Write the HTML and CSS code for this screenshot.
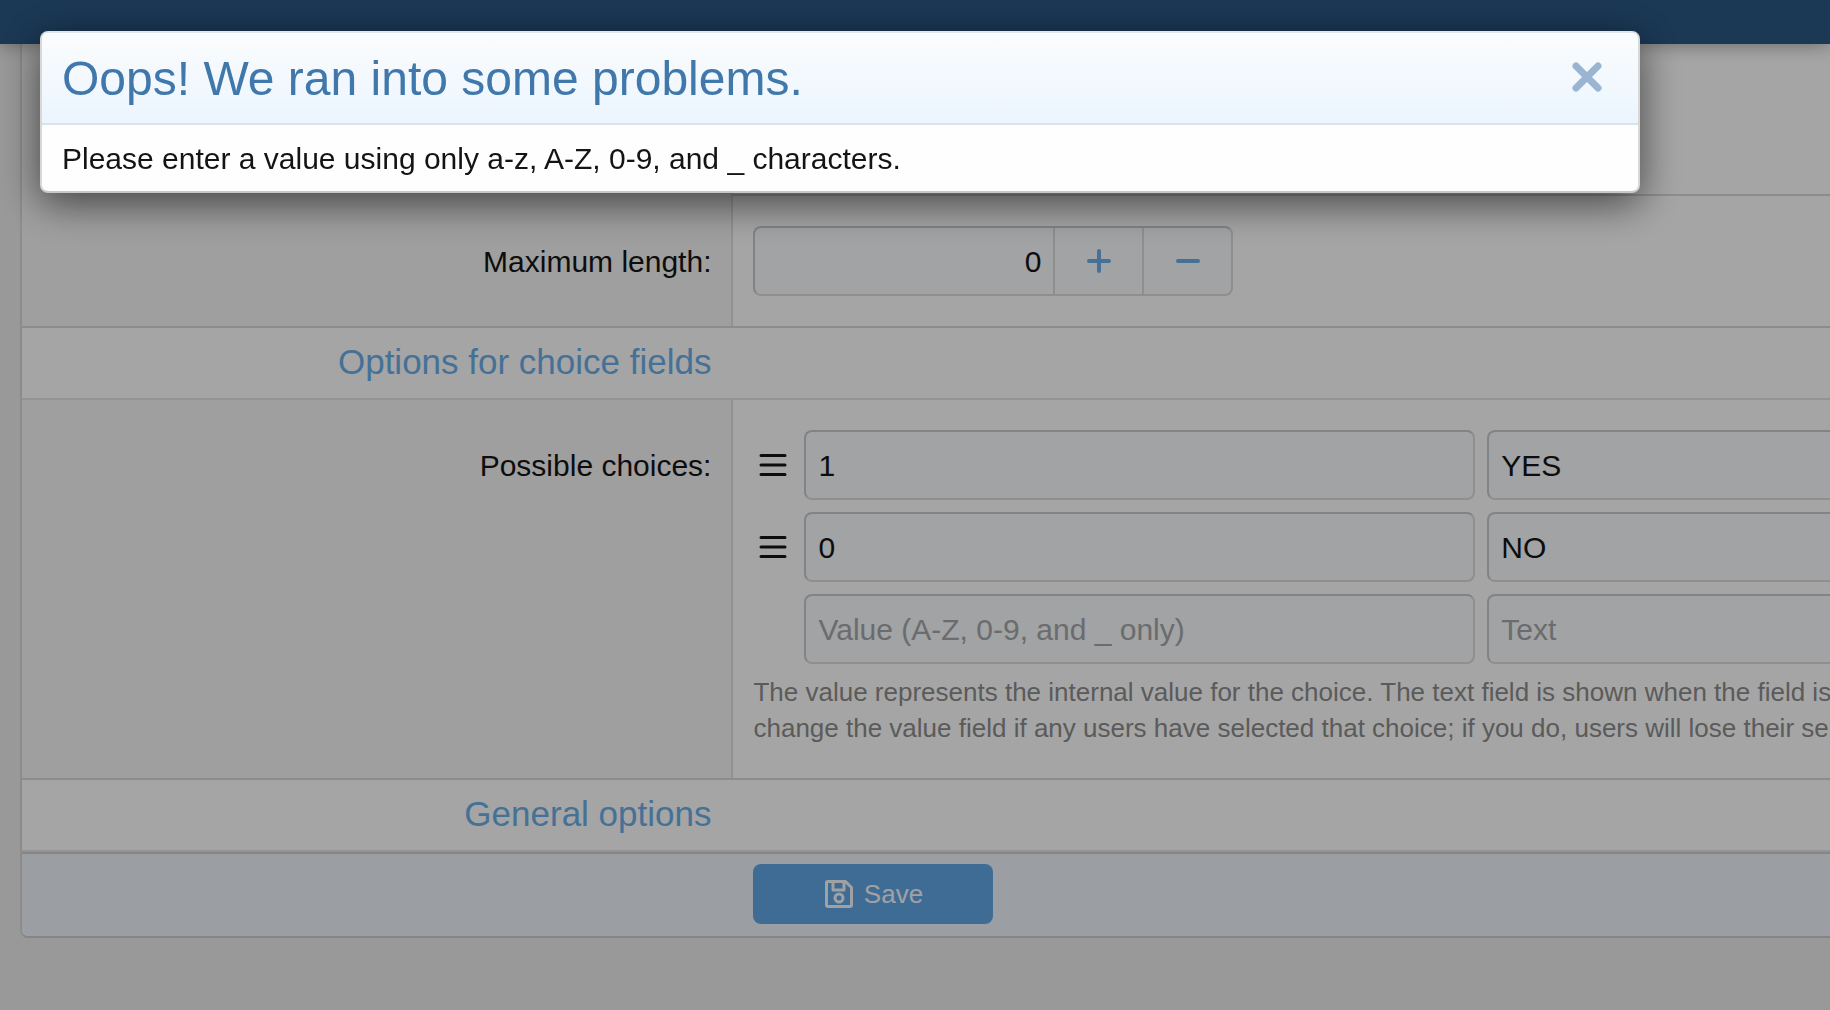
FILE: index.html
```html
<!DOCTYPE html>
<html lang="en">
<head>
<meta charset="utf-8">
<meta name="viewport" content="width=device-width, initial-scale=1">
<title>Custom field</title>
<link rel="stylesheet" href="styles.css">
</head>
<body>
<header class="topbar"></header>
<main class="page">
  <form class="block">
    <div class="row row--first">
      <div class="row-label"></div>
      <div class="row-field"></div>
    </div>
    <div class="row row--ruled">
      <div class="row-label"><label for="max-length">Maximum length:</label></div>
      <div class="row-field">
        <div class="stepper">
          <input class="stepper-input" id="max-length" type="text" inputmode="numeric" value="0">
          <button class="stepper-button" type="button" aria-label="Increase">
            <svg class="icon-step" viewBox="0 0 24 24" aria-hidden="true"><path d="M12 2v20M2 12h20"/></svg>
          </button>
          <button class="stepper-button" type="button" aria-label="Decrease">
            <svg class="icon-step" viewBox="0 0 24 24" aria-hidden="true"><path d="M2 12h20"/></svg>
          </button>
        </div>
      </div>
    </div>

    <h2 class="section-title"><span class="section-text">Options for choice fields</span></h2>

    <div class="row">
      <div class="row-label"><label for="choice-1">Possible choices:</label></div>
      <div class="row-field">
        <div class="choices">
          <div class="choice">
            <span class="handle"><svg class="icon-bars" viewBox="0 0 28 28" aria-hidden="true"><path d="M2 4.500h24M2 14h24M2 23.500h24"/></svg></span>
            <input class="input" id="choice-1" type="text" value="1">
            <input class="input" type="text" value="YES" aria-label="Text for choice 1">
          </div>
          <div class="choice">
            <span class="handle"><svg class="icon-bars" viewBox="0 0 28 28" aria-hidden="true"><path d="M2 4.500h24M2 14h24M2 23.500h24"/></svg></span>
            <input class="input" type="text" value="0" aria-label="Value for choice 2">
            <input class="input" type="text" value="NO" aria-label="Text for choice 2">
          </div>
          <div class="choice">
            <span class="handle"></span>
            <input class="input" type="text" placeholder="Value (A-Z, 0-9, and _ only)" aria-label="New value">
            <input class="input" type="text" placeholder="Text" aria-label="New text">
          </div>
        </div>
        <p class="explain">The value represents the internal value for the choice. The text field is shown when the field is<br>change the value field if any users have selected that choice; if you do, users will lose their se</p>
      </div>
    </div>

    <h2 class="section-title"><span class="section-text">General options</span></h2>

    <div class="submit-row">
      <button class="save" type="submit">
        <svg class="icon-save" viewBox="0 0 30 30" aria-hidden="true"><path d="M4 2.500h17.500l6 6V26a1.500 1.500 0 0 1-1.500 1.500H4A1.500 1.500 0 0 1 2.500 26V4A1.500 1.500 0 0 1 4 2.500zM9 3v8h11V3"/><circle cx="15" cy="19" r="4"/></svg>
        Save
      </button>
    </div>
  </form>
</main>

<div class="overlay">
  <div class="dialog" role="alertdialog" aria-labelledby="dialog-title">
    <div class="dialog-header">
      <h1 class="dialog-title" id="dialog-title">Oops! We ran into some problems.</h1>
      <button class="dialog-close" type="button" aria-label="Close">
        <svg class="icon-close" viewBox="0 0 32 32" aria-hidden="true"><path d="M5 5l22 22M27 5l-22 22"/></svg>
      </button>
    </div>
    <div class="dialog-body">Please enter a value using only a-z, A-Z, 0-9, and _ characters.</div>
  </div>
</div>
</body>
</html>
```
FILE: styles.css
```css
* {
  box-sizing: border-box;
}

body {
  margin: 0;
  background: #ebebeb;
  color: #141414;
  font-family: "Liberation Sans", Arial, sans-serif;
  font-size: 30px;
  line-height: 42px;
}

button,
input {
  margin: 0;
  font: inherit;
  color: inherit;
}

svg {
  display: block;
  fill: none;
  stroke: currentColor;
}

.topbar {
  position: relative;
  height: 44px;
  background: #2a5683;
  box-shadow: 0 0 20px rgba(0, 0, 0, 0.4);
}

.page {
  overflow: hidden;
  padding-left: 20px;
}

/* The form runs on past the right edge of the window. */
.block {
  margin-right: -350px;
  border: 2px solid #d8d8d8;
  border-top: 0;
  border-bottom-color: #cdcdcd;
  border-radius: 0 0 8px 8px;
  background: #fefefe;
}

.row {
  display: grid;
  grid-template-columns: 33% 1fr;
}

.row--first {
  min-height: 150px;
}

.row-label {
  padding: 45px 20px 30px 0;
  border-right: 2px solid #dfdfdf;
  background: #f5f5f5;
  text-align: right;
}

.row-field {
  padding: 30px 20px;
}

.row--ruled .row-label {
  padding-top: 47px;
}

.row--ruled .row-field {
  border-top: 2px solid #d8d8d8;
}

.section-title {
  display: grid;
  grid-template-columns: 33% 1fr;
  margin: 0;
  padding: 13px 0 15px;
  border-top: 2px solid #d8d8d8;
  border-bottom: 2px solid #e4e4e4;
  color: #6caee8;
  font-size: 35px;
  font-weight: 400;
}

.section-text {
  padding-right: 22px;
  text-align: right;
}

.input,
.stepper {
  height: 70px;
  border: 2px solid;
  border-color: #c8cacc #dcdcdc #dcdcdc #c8cacc;
  border-radius: 8px;
  background: #f8fafc;
}

.input {
  flex: 1;
  min-width: 0;
  padding: 2px 12px 0;
}

.input::placeholder {
  color: #a4a6a8;
  opacity: 1;
}

.stepper {
  display: flex;
  width: 480px;
}

.stepper-input {
  flex: 1;
  min-width: 0;
  padding: 2px 12px 0;
  border: 0;
  background: none;
  text-align: right;
}

.stepper-button {
  display: grid;
  place-items: center;
  width: 89px;
  padding: 0;
  border: 0;
  border-left: 2px solid #dcdcdc;
  background: none;
  color: #6caee8;
}

.icon-step {
  width: 24px;
  height: 24px;
  stroke-width: 4;
  stroke-linecap: round;
}

.choices {
  display: grid;
  gap: 12px;
}

.choice {
  display: flex;
  gap: 12px;
}

.handle {
  display: grid;
  place-items: center;
  width: 39px;
}

.icon-bars {
  width: 28px;
  height: 28px;
  stroke-width: 3;
  stroke-linecap: round;
}

.explain {
  margin: 10px 0 2px;
  color: #8c8c8c;
  font-size: 26px;
  line-height: 36px;
  white-space: nowrap;
}

.submit-row {
  padding: 10px 0 12px calc(33% + 20px);
  border-top: 2px solid #cdcdcd;
  border-radius: 0 0 6px 6px;
  background: #eff5fa;
}

.save {
  display: flex;
  align-items: center;
  justify-content: center;
  gap: 10px;
  width: 240px;
  height: 60px;
  padding: 0;
  border: 0;
  border-radius: 8px;
  background: #61a6e5;
  color: #f5f8fa;
  font-size: 26px;
}

.icon-save {
  width: 30px;
  height: 30px;
  stroke-width: 3;
  stroke-linejoin: round;
}

.overlay {
  position: fixed;
  inset: 0;
  padding: 31px 40px;
  background: rgba(0, 0, 0, 0.35);
}

.dialog {
  max-width: 1600px;
  border: 2px solid;
  border-color: #dfe6ee #d8d8d8 #c8c8c8 #d8d8d8;
  border-radius: 8px;
  background: #fefefe;
  box-shadow: 0 10px 40px rgba(0, 0, 0, 0.6);
}

.dialog-header {
  display: flex;
  align-items: flex-start;
  justify-content: space-between;
  padding: 13px 20px 11px;
  border-bottom: 2px solid #dce3e8;
  border-radius: 6px 6px 0 0;
  background: linear-gradient(#fbfcfd, #ebf5fe);
}

.dialog-title {
  margin: 0;
  color: #4178ab;
  font-size: 48px;
  font-weight: 400;
  line-height: 66px;
}

.dialog-close {
  padding: 15px;
  border: 0;
  background: none;
  color: #9ab5d2;
}

.icon-close {
  width: 32px;
  height: 32px;
  stroke-width: 7;
  stroke-linecap: round;
}

.dialog-body {
  padding: 13px 20px 11px;
}
```
